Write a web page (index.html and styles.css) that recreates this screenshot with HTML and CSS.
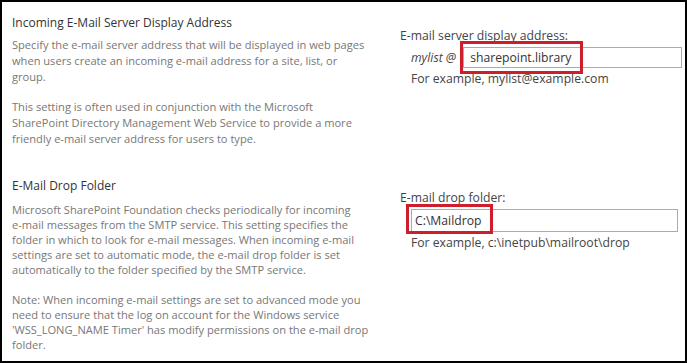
FILE: index.html
```html
<!DOCTYPE html>
<html lang="en">
<head>
    <meta charset="UTF-8">
    <title>Incoming E-Mail Settings</title>
    <link rel="stylesheet" href="styles.css">
</head>
<body>
<div class="frame">
    <section class="row row-first">
        <div class="info">
            <h3>Incoming E-Mail Server Display Address</h3>
            <p>Specify the e-mail server address that will be displayed in web pages<br>when users create an incoming e-mail address for a site, list, or<br>group.</p>
            <p>This setting is often used in conjunction with the Microsoft<br>SharePoint Directory Management Web Service to provide a more<br>friendly e-mail server address for users to type.</p>
        </div>
        <div class="control">
            <label for="server">E-mail server display address:</label>
            <div class="field-line">
                <span class="alias">mylist @</span>
                <div class="field field-server">
                    <input type="text" id="server" value="sharepoint.library">
                    <span class="mark mark-server"></span>
                </div>
            </div>
            <div class="hint">For example, mylist@example.com</div>
        </div>
    </section>
    <section class="row row-second">
        <div class="info">
            <h3>E-Mail Drop Folder</h3>
            <p>Microsoft SharePoint Foundation checks periodically for incoming<br>e-mail messages from the SMTP service. This setting specifies the<br>folder in which to look for e-mail messages. When incoming e-mail<br>settings are set to automatic mode, the e-mail drop folder is set<br>automatically to the folder specified by the SMTP service.</p>
            <p>Note: When incoming e-mail settings are set to advanced mode you<br>need to ensure that the log on account for the Windows service<br>'WSS_LONG_NAME Timer' has modify permissions on the e-mail drop<br>folder.</p>
        </div>
        <div class="control">
            <label for="drop">E-mail drop folder:</label>
            <div class="field-line">
                <div class="field field-drop">
                    <input type="text" id="drop" value="C:\Maildrop">
                    <span class="mark mark-drop"></span>
                </div>
            </div>
            <div class="hint">For example, c:\inetpub\mailroot\drop</div>
        </div>
    </section>
</div>
</body>
</html>
```

FILE: styles.css
```css
body {
    margin: 0;
    background: #fff;
    font-family: "Open Sans", "Noto Sans", Arial, sans-serif;
}

.frame {
    width: 687px;
    height: 363px;
    box-sizing: border-box;
    border: 2px solid #000;
    overflow: hidden;
}

.row {
    display: grid;
    grid-template-columns: 398px 1fr;
}

.row-first {
    height: 170px;
    padding-top: 12px;
    box-sizing: border-box;
}

.row-second {
    padding-top: 5px;
}

/* left column: section title + description */
.info {
    padding-left: 10px;
}

.info h3 {
    margin: 0 0 6px;
    font-size: 12px;
    font-weight: normal;
    color: #333;
}

.info p {
    margin: 0 0 14px;
    font-size: 11.1px;
    line-height: 16px;
    color: #777;
    white-space: nowrap;
}

.row-second .info h3 {
    margin-bottom: 8px;
}

.row-second .info p {
    margin-bottom: 15px;
    line-height: 15px;
}

/* right column: the input */
.control {
    padding-top: 13px;
    font-size: 12.2px;
    color: #444;
}

.row-second .control {
    padding-top: 12px;
}

.control label {
    display: block;
}

.field-line {
    display: flex;
    align-items: center;
    gap: 7px;
    padding-left: 11px;
    margin-top: 3px;
}

.alias {
    font-style: italic;
}

.field {
    position: relative;
    flex: 1;
}

.field input {
    width: 100%;
    height: 21px;
    box-sizing: border-box;
    border: 1px solid #ababab;
    padding: 0 6px;
    font-family: inherit;
    font-size: 12.2px;
    color: #333;
    background: #fff;
}

.field-server {
    margin-right: 3px;
}

.field-drop {
    margin-right: 7px;
}

.field-drop input {
    height: 23px;
    padding: 0 3px;
}

/* red annotation frames */
.mark {
    position: absolute;
    border: 3px solid #cc1f2b;
    box-sizing: border-box;
}

.mark-server {
    left: -3px;
    top: -6px;
    width: 123px;
    height: 33px;
}

.mark-drop {
    left: -5px;
    top: -5px;
    width: 87px;
    height: 30px;
}

.hint {
    padding-left: 11px;
    margin-top: 2px;
}
```
